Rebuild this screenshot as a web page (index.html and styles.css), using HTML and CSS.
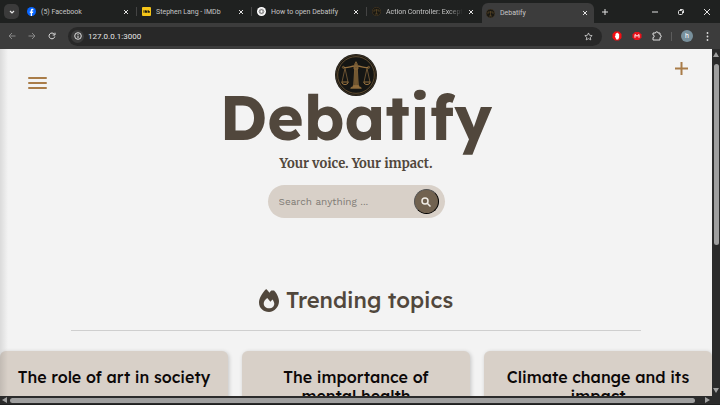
FILE: index.html
```html
<!DOCTYPE html>
<html lang="en">
<head>
    <meta charset="UTF-8">
    <meta name="viewport" content="width=device-width, initial-scale=1.0">
    <title>Debatify</title>
    <link rel="stylesheet" href="styles.css">
</head>
<body>

<!-- Tab strip -->
<div class="tabs">
    <button class="tab-search" aria-label="Search tabs">
        <svg width="8" height="8" viewBox="0 0 8 8"><path d="M2 3l2 2 2-2" fill="none" stroke="#e6e6e6" stroke-width="1.2"/></svg>
    </button>
    <div class="tab">
        <svg class="favicon" viewBox="0 0 18 18"><circle cx="9" cy="9" r="9" fill="#0866ff"/><path d="M7.500 18v-6H5.600V9h1.900V7.500C7.500 4.900 8.700 3.600 11 3.600c.7 0 1.300.1 1.700.2v2.500h-1.200c-1.100 0-1.400.5-1.400 1.400V9h2.500l-.5 3h-2v6z" fill="#fff"/></svg>
        <span class="tab-title">(5) Facebook</span>
        <button class="close" aria-label="Close tab"><svg width="6" height="6" viewBox="0 0 6 6"><path d="M1 1l4 4M5 1L1 5"/></svg></button>
    </div>
    <div class="tab">
        <svg class="favicon" viewBox="0 0 18 18"><rect width="18" height="18" rx="2" fill="#f5c518"/><path d="M3 6.500h2v5H3zM6 6.500h2l.7 2 .6-2h1.700v5H6zM12 6.500h1.500v1.500H15.500v3.500H12z" fill="#1c1a10"/></svg>
        <span class="tab-title">Stephen Lang - IMDb</span>
        <button class="close" aria-label="Close tab"><svg width="6" height="6" viewBox="0 0 6 6"><path d="M1 1l4 4M5 1L1 5"/></svg></button>
    </div>
    <div class="tab">
        <svg class="favicon" viewBox="0 0 18 18"><circle cx="9" cy="9" r="9" fill="#fff"/><g fill="none" stroke="#666" stroke-width="1"><ellipse cx="9" cy="9" rx="5.500" ry="3"/><ellipse cx="9" cy="9" rx="5.500" ry="3" transform="rotate(60 9 9)"/><ellipse cx="9" cy="9" rx="5.500" ry="3" transform="rotate(120 9 9)"/></g></svg>
        <span class="tab-title">How to open Debatify</span>
        <button class="close" aria-label="Close tab"><svg width="6" height="6" viewBox="0 0 6 6"><path d="M1 1l4 4M5 1L1 5"/></svg></button>
    </div>
    <div class="tab">
        <svg class="favicon" viewBox="0 0 18 18"><circle cx="9" cy="9" r="8.500" fill="#191813" stroke="#5a4526"/><path d="M9 4v10M4 6h10M6 14h6M4 6v4M14 6v4" stroke="#76592e" fill="none"/></svg>
        <span class="tab-title fade">Action Controller: Exception</span>
        <button class="close" aria-label="Close tab"><svg width="6" height="6" viewBox="0 0 6 6"><path d="M1 1l4 4M5 1L1 5"/></svg></button>
    </div>
    <div class="tab active">
        <svg class="favicon" viewBox="0 0 18 18"><circle cx="9" cy="9" r="8.500" fill="#191813" stroke="#4a3a22"/><path d="M9 4v10M4 6h10M6 14h6M4 6v4M14 6v4" stroke="#76592e" fill="none"/></svg>
        <span class="tab-title">Debatify</span>
        <button class="close" aria-label="Close tab"><svg width="6" height="6" viewBox="0 0 6 6"><path d="M1 1l4 4M5 1L1 5"/></svg></button>
    </div>
    <button class="new-tab" aria-label="New tab"><svg width="8" height="8" viewBox="0 0 8 8"><path d="M4 1v6M1 4h6"/></svg></button>
    <div class="window-buttons">
        <button aria-label="Minimize"><svg width="8" height="8" viewBox="0 0 8 8"><path d="M1 4h6"/></svg></button>
        <button aria-label="Restore"><svg width="8" height="8" viewBox="0 0 8 8"><rect x="1.500" y="2.500" width="4" height="4" rx="1"/><path d="M3 1.500h2.500q1 0 1 1V5"/></svg></button>
        <button aria-label="Close"><svg width="8" height="8" viewBox="0 0 8 8"><path d="M1 1l6 6M7 1L1 7"/></svg></button>
    </div>
</div>

<!-- Toolbar -->
<div class="toolbar">
    <button class="nav-btn dim" aria-label="Back"><svg width="8" height="8" viewBox="0 0 8 8"><path d="M7.500 4H1M4 1L1 4l3 3"/></svg></button>
    <button class="nav-btn dim" aria-label="Forward"><svg width="8" height="8" viewBox="0 0 8 8"><path d="M.5 4H7M4 1l3 3-3 3"/></svg></button>
    <button class="nav-btn" aria-label="Reload"><svg width="8" height="8" viewBox="0 0 8 8"><path d="M6.800 4.500A2.900 2.900 0 1 1 6.300 2.200M7 .7v2.300H4.700"/></svg></button>
    <div class="address">
        <span class="info"><svg width="8" height="8" viewBox="0 0 8 8"><circle cx="4" cy="4" r="3.300"/><path d="M4 3.600V6M4 2v.9"/></svg></span>
        <input class="url" type="text" value="127.0.0.1:3000" aria-label="Address">
        <button class="star" aria-label="Bookmark"><svg width="9" height="9" viewBox="0 0 24 24"><path d="M12 2.500l2.900 6.300 6.900.8-5.100 4.700 1.400 6.800L12 17.700l-6.100 3.400 1.400-6.800L2.200 9.600l6.900-.8z"/></svg></button>
    </div>
    <div class="extensions">
        <svg width="10" height="10" viewBox="0 0 20 20"><path d="M6 1h8l5 5v8l-5 5H6l-5-5V6z" fill="#f40d12"/><path d="M5.500 10l1.500-.5V5.500h1.500V4H10v-.7h1.500V4.500H13V6h1.300v7l-2 4H8.500z" fill="#fff"/></svg>
        <svg width="10" height="10" viewBox="0 0 20 20"><path d="M6 2h8l5 5v6l-5 5H6l-5-5V7z" fill="#e9111b"/><path d="M6 13.500V7l4 3.500L14 7v6.500" stroke="#fff" stroke-width="2" fill="none"/></svg>
        <svg width="10" height="10" viewBox="0 0 20 20"><path d="M2 4h5a2.500 2.500 0 0 1 5 0h4v4a2.500 2.500 0 0 1 0 5v5H2v-5a2.500 2.500 0 0 0 0-5z" fill="none" stroke="#ddd" stroke-width="2"/></svg>
    </div>
    <span class="divider"></span>
    <span class="avatar">h</span>
    <button class="more" aria-label="Menu"><svg width="3" height="9" viewBox="0 0 3 9"><circle cx="1.500" cy="1" r=".9"/><circle cx="1.500" cy="4.500" r=".9"/><circle cx="1.500" cy="8" r=".9"/></svg></button>
</div>

<div class="viewport">
    <main class="page">
        <header class="header">
            <button class="menu-btn" aria-label="Open menu"><span></span><span></span><span></span></button>
            <div class="brand">
                <svg class="logo" viewBox="0 0 126 126">
                    <circle cx="63" cy="63" r="63" fill="#151614"/>
                    <g fill="none" stroke="#94703f" stroke-width="2.200">
                        <circle cx="63" cy="63" r="60" stroke="#4e3d26"/>
                        <circle cx="63" cy="63" r="55" stroke="#7c5f38"/>
                        <path d="M26 40c10 4 22-4 32-4h10c10 0 22 8 32 4" stroke-width="4"/>
                        <path d="M30 43L21 84M30 43l9 41M96 43l-9 41M96 43l9 41" stroke-width="2"/>
                        <path d="M20 84h20q-2 8-10 8T20 84zM86 84h20q-2 8-10 8T86 84z" stroke-width="3"/>
                        <path d="M59 45h8l3 50H56zM63 48v46M57 39h12v6H57zM59 33q0-5 4-10 4 5 4 10z" fill="#604a2a"/>
                        <path d="M54 95h18v4H54zM47 103q0-4 7-4h18q7 0 7 4z" fill="#8b693b"/>
                        <circle cx="25" cy="40" r="3"/><circle cx="101" cy="40" r="3"/>
                    </g>
                </svg>
                <h1>Debatify</h1>
                <p class="tagline">Your voice. Your impact.</p>
                <form class="search">
                    <input type="text" placeholder="Search anything ..." aria-label="Search anything">
                    <button type="button" aria-label="Search">
                        <svg width="10" height="10" viewBox="0 0 20 20"><circle cx="8" cy="8" r="6"/><path d="M12.500 12.500L19 19"/></svg>
                    </button>
                </form>
            </div>
            <a class="add-btn" href="#" aria-label="New debate"><svg width="13" height="13" viewBox="0 0 13 13"><path d="M6.500 0v13M0 6.500h13"/></svg></a>
        </header>

        <section class="trending">
            <h2>
                <svg width="20" height="23" viewBox="0 0 448 512"><path fill="#51473c" fill-rule="evenodd" d="M160 0c28 25 52 53 74 81 12-16 27-35 43-50 20 0 50 0 60 0 70 62 111 180 111 240 0 118-100 241-224 241S0 429 0 301C0 213 70 90 160 0zM225 432c67 0 117-45 117-105 0-28-16-65-41-95l-45 51-71-85c-47 30-79 80-79 126 0 65 52 108 119 108z"/></svg>
                Trending topics
            </h2>
        </section>

        <section class="cards">
            <article class="card"><h3>The role of art in society</h3></article>
            <article class="card"><h3>The importance of mental health</h3></article>
            <article class="card"><h3>Climate change and its impact</h3></article>
        </section>
    </main>

    <div class="scroll-y">
        <svg width="6" height="5" viewBox="0 0 6 5"><path d="M3 0l3 5H0z"/></svg>
        <div class="track"><div class="thumb"></div></div>
        <svg width="6" height="5" viewBox="0 0 6 5"><path d="M3 5l3-5H0z"/></svg>
    </div>
    <div class="scroll-x">
        <svg width="5" height="6" viewBox="0 0 5 6"><path d="M0 3l5-3v6z"/></svg>
        <div class="track"><div class="thumb"></div></div>
        <svg width="5" height="6" viewBox="0 0 5 6"><path d="M5 3L0 0v6z"/></svg>
    </div>
</div>

</body>
</html>
```
FILE: styles.css
```css
* {
    box-sizing: border-box;
}

body {
    margin: 0;
    height: 100vh;
    display: flex;
    flex-direction: column;
    overflow: hidden;
    background-color: #1f2020;
    font-family: "Roboto", sans-serif;
}

button {
    display: flex;
    align-items: center;
    justify-content: center;
    padding: 0;
    border: none;
    background: none;
}

svg {
    flex: none;
}

h1, h2, h3 {
    font-family: "Lexend", "Inter", sans-serif;
    margin: 0;
}

/* Tab strip */
.tabs {
    display: flex;
    align-items: center;
    height: 23px;
    padding: 0 4px;
    background-color: #1f2120;
}

.tab-search {
    width: 15px;
    height: 15px;
    margin-right: 3px;
    border-radius: 5px;
    background-color: #3b3b3b;
}

.tab {
    flex: 0 1 115px;
    display: flex;
    align-items: center;
    gap: 5px;
    height: 20px;
    min-width: 0;
    padding: 0 8px 0 5px;
    background: linear-gradient(#444, #444) right center / 1px 9px no-repeat;
}

.tab:nth-child(5) {
    background: none;
}

.tab.active {
    flex-basis: 112px;
    align-self: flex-end;
    padding: 0 6px 0 4px;
    background: #3c3c3c;
    border-radius: 6px 6px 0 0;
}

.favicon {
    width: 9px;
    height: 9px;
}

.tab-title {
    flex: 1;
    overflow: hidden;
    white-space: nowrap;
    font-size: 7px;
    line-height: 12px;
    color: #c6c6c6;
}

.fade {
    -webkit-mask-image: linear-gradient(to right, #000 80%, transparent);
    mask-image: linear-gradient(to right, #000 80%, transparent);
}

.close svg, .new-tab svg, .window-buttons svg {
    fill: none;
    stroke: #e2e2e2;
}

.new-tab {
    margin-left: 7px;
}

.window-buttons {
    display: flex;
    gap: 18px;
    margin-left: auto;
    padding-right: 5px;
}

/* Toolbar */
.toolbar {
    display: flex;
    align-items: center;
    height: 26px;
    padding: 0 11px 0 8px;
    background-color: #3c3c3c;
}

.nav-btn {
    width: 8px;
    margin-right: 12px;
}

.toolbar button svg, .info svg {
    fill: none;
    stroke: #dedede;
}

.toolbar .dim svg {
    stroke: #888;
}

.address {
    flex: 1;
    display: flex;
    align-items: center;
    height: 19px;
    padding: 0 9px 0 3px;
    border-radius: 10px;
    background-color: #282828;
}

.info {
    display: flex;
    align-items: center;
    justify-content: center;
    width: 13px;
    height: 13px;
    border-radius: 50%;
    background-color: #3c3c3c;
}

.url {
    flex: 1;
    min-width: 0;
    padding: 0 4px;
    border: none;
    background: none;
    color: #e4e4e4;
    font: 8px "Roboto", sans-serif;
}

.toolbar .star svg {
    stroke-width: 2;
}

.extensions {
    display: flex;
    gap: 10px;
    margin-left: 10px;
}

.divider {
    width: 1px;
    height: 9px;
    margin: 0 9px;
    background-color: #5c5c5c;
}

.avatar {
    width: 12px;
    height: 12px;
    border-radius: 50%;
    background-color: #78909c;
    color: #fff;
    font-size: 7px;
    line-height: 12px;
    text-align: center;
}

.more {
    margin-left: 13px;
}

.toolbar .more svg {
    fill: #dedede;
    stroke: none;
}

/* Visible part of the page and its scrollbars */
.viewport {
    flex: 1;
    min-height: 0;
    display: grid;
    grid-template-columns: 1fr 8px;
    grid-template-rows: 1fr 8px;
    padding-bottom: 1px;
}

.page {
    position: relative;
    overflow: hidden;
    background-color: #f3f3f3;
}

.page::before {
    content: "";
    position: absolute;
    z-index: 1;
    top: 0;
    bottom: 0;
    left: 0;
    width: 8px;
    background: linear-gradient(to right, rgba(0, 0, 0, 0.1), transparent);
}

.header {
    display: grid;
    grid-template-columns: 1fr auto 1fr;
    align-items: start;
    padding: 5px 24px 0;
}

.menu-btn {
    flex-direction: column;
    gap: 3px;
    width: 19px;
    margin: 23px 0 0 4px;
}

.menu-btn span {
    width: 100%;
    height: 2px;
    border-radius: 1px;
    background-color: #a97c48;
}

.add-btn {
    display: flex;
    justify-self: end;
    margin-top: 8px;
}

.add-btn svg {
    stroke: #a97c48;
    stroke-width: 2;
}

.brand {
    display: flex;
    flex-direction: column;
    align-items: center;
}

.logo {
    width: 42px;
    height: 42px;
}

h1 {
    font-size: 62px;
    font-weight: 700;
    line-height: 42px;
    color: #51473c;
}

.tagline {
    margin: 16px 0 11px;
    font-family: "Merriweather", "DejaVu Serif", serif;
    font-size: 13px;
    font-weight: 700;
    line-height: 20px;
    color: #51473c;
}

.search {
    display: flex;
    align-items: center;
    width: 177px;
    height: 33px;
    padding: 0 6px 0 11px;
    border-radius: 17px;
    background-color: #d8d0c8;
}

.search input {
    flex: 1;
    min-width: 0;
    padding: 0;
    border: none;
    background: none;
    font: 10px "Work Sans", "Inter", sans-serif;
}

.search input::placeholder {
    color: #7f7b75;
}

.search button {
    width: 25px;
    height: 25px;
    border: 1px outset #000;
    border-radius: 50%;
    background-color: #716250;
}

.search svg {
    fill: none;
    stroke: #f0ece6;
    stroke-width: 3;
}

/* Trending */
.trending {
    width: 80%;
    margin: 67px auto 20px;
    padding-bottom: 15px;
    border-bottom: 1px solid #cfcfcf;
}

h2 {
    display: flex;
    align-items: center;
    justify-content: center;
    gap: 7px;
    font-size: 22px;
    font-weight: 500;
    line-height: 30px;
    color: #51473c;
}

.cards {
    display: grid;
    grid-template-columns: repeat(3, 1fr);
    gap: 14px;
}

.card {
    height: 120px;
    padding: 17px 15px;
    border-radius: 6px;
    background-color: #d8d0c8;
    box-shadow: 1px 1px 4px rgba(0, 0, 0, 0.2);
}

.card h3 {
    font-size: 16px;
    font-weight: 500;
    line-height: 19px;
    text-align: center;
    color: #0c0808;
}

/* Scrollbars */
.scroll-y, .scroll-x {
    display: flex;
    align-items: center;
    background-color: #2b2b2b;
}

.scroll-y {
    flex-direction: column;
    padding: 3px 0;
}

.scroll-x {
    grid-column: 1 / 3;
    padding: 0 10px 0 2px;
}

.scroll-y svg, .scroll-x svg {
    fill: #a0a0a0;
}

.track {
    flex: 1;
}

.scroll-x .track {
    padding: 0 10px 0 3px;
}

.thumb {
    border-radius: 3px;
    background-color: #9f9f9f;
}

.scroll-y .track {
    padding: 7px 0;
}

.scroll-y .thumb {
    width: 5px;
    height: 57%;
}

.scroll-x .thumb {
    height: 5px;
}
```
